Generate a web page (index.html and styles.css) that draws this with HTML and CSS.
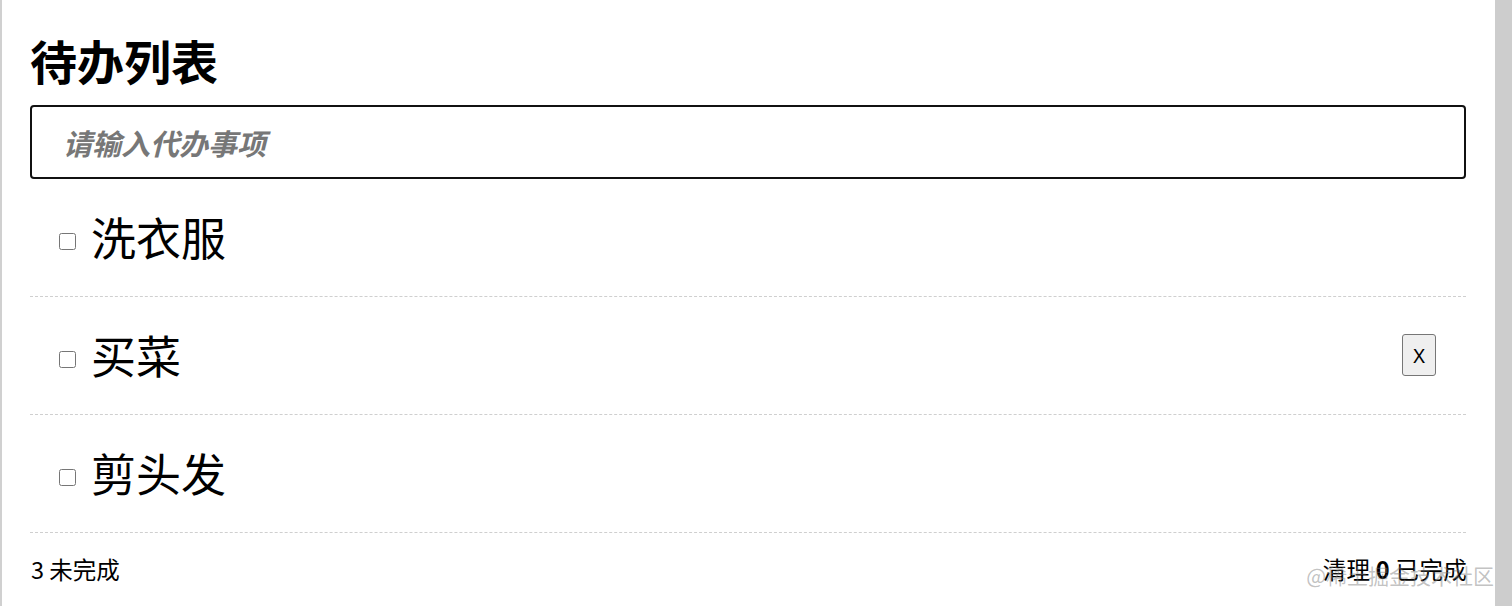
FILE: index.html
```html
<!DOCTYPE html>
<html lang="zh">
<head>
<meta charset="utf-8">
<title>待办列表</title>
<link rel="stylesheet" href="styles.css">
</head>
<body>
<div class="page">
  <main class="app">
    <h1 class="title">待办列表</h1>
    <input class="new-todo" type="text" placeholder="请输入代办事项">
    <ul class="todo-list">
      <li class="todo"><input class="check" type="checkbox"><span class="label">洗衣服</span></li>
      <li class="todo"><input class="check" type="checkbox"><span class="label">买菜</span><button class="destroy">X</button></li>
      <li class="todo"><input class="check" type="checkbox"><span class="label">剪头发</span></li>
    </ul>
    <footer class="footer">
      <span class="count">3 未完成</span>
      <span class="clear">清理 <b>0</b> 已完成</span>
      <span class="watermark">@稀土掘金技术社区</span>
    </footer>
  </main>
  <div class="scrollbar"></div>
</div>
</body>
</html>
```
FILE: styles.css
```css
html, body {
  margin: 0;
  padding: 0;
  background: #fff;
}
body {
  font-family: "Noto Sans CJK SC", "Noto Sans", sans-serif;
  color: #000;
}
.page {
  display: flex;
  height: 606px;
  overflow: hidden;
}
.app {
  flex: 1;
  border-left: 2px solid #d0d0d0;
  padding: 0 29px 0 28px;
  display: flex;
  flex-direction: column;
}
.scrollbar {
  width: 17px;
  background: #cdcdcd;
}
.title {
  margin: 28px 0 0;
  font-size: 47px;
  line-height: 64px;
  font-weight: 700;
  height: 78px;
}
.new-todo {
  box-sizing: border-box;
  flex: none;
  height: 74px;
  width: 100%;
  border: 2px solid #111;
  border-radius: 4px;
  padding: 0 31px;
  font-family: "Noto Sans CJK SC", sans-serif;
  font-size: 29px;
  font-weight: 700;
  font-style: italic;
  outline: none;
}
.new-todo::placeholder {
  color: #777;
  font-style: italic;
  font-weight: 700;
}
.todo-list {
  list-style: none;
  margin: 0;
  padding: 0;
}
.todo {
  display: flex;
  align-items: center;
  height: 117px;
  border-bottom: 1px dashed #cfcfcf;
  padding-left: 29px;
  padding-right: 29px;
}
.check {
  width: 17px;
  height: 17px;
  margin: 8px 15px 0 0;
}
.label {
  font-size: 45px;
  flex: 1;
  line-height: 60px;
}
.destroy {
  width: 34px;
  height: 42px;
  padding: 0;
  font-family: "Noto Sans", sans-serif;
  font-size: 20px;
  background: #efefef;
  border: 1px solid #767676;
  border-radius: 3px;
  color: #000;
  margin-top: 0;
  margin-right: 1px;
}
.footer {
  position: relative;
  display: flex;
  justify-content: space-between;
  align-items: center;
  height: 74px;
  font-size: 23.5px;
}
.count {
  margin-left: 1px;
}
.clear {
  margin-right: -1px;
  letter-spacing: 0.3px;
}
.clear b {
  font-weight: 700;
}
.watermark {
  position: absolute;
  right: -28px;
  top: 27px;
  font-size: 21px;
  color: rgba(120, 120, 120, 0.45);
  pointer-events: none;
}
```
